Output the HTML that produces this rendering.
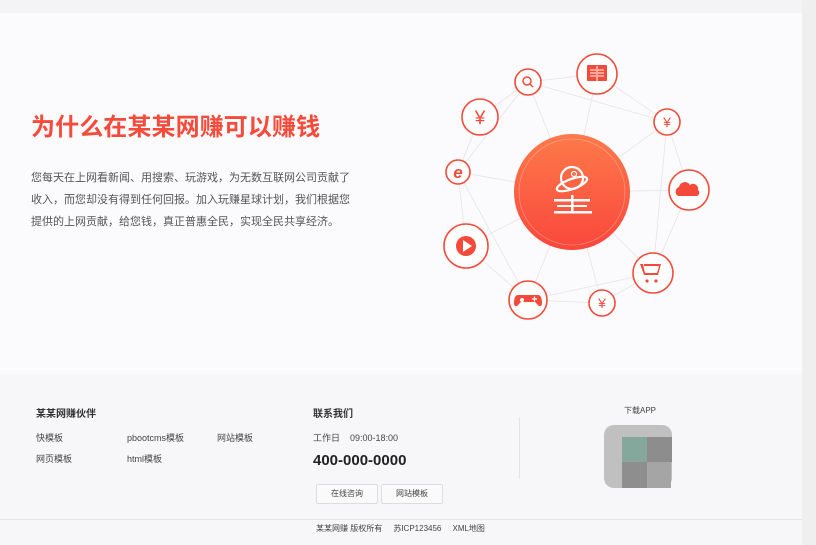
<!DOCTYPE html>
<html><head><meta charset="utf-8"><style>
*{margin:0;padding:0;box-sizing:border-box}
body{width:816px;height:545px;overflow:hidden;background:#fbfafc;font-family:"Liberation Sans","Noto Sans CJK SC",sans-serif;position:relative}
.a{position:absolute;white-space:nowrap}
.top{position:absolute;left:0;top:0;width:802px;height:13px;background:#f4f3f6}
.sb{position:absolute;right:0;top:0;width:14px;height:545px;background:#efefef}
h1{position:absolute;left:31px;top:107px;font-size:24px;font-weight:bold;color:#f54b3b;letter-spacing:0.1px;white-space:nowrap}
.p{position:absolute;left:31px;top:167px;font-size:11px;line-height:22px;color:#555;white-space:nowrap}
.foot{position:absolute;left:0;top:374px;width:802px;height:171px;background:#f7f6f9}
.f{font-size:9px;color:#444}
.btn{position:absolute;height:20px;border:1px solid #ddd;border-radius:2px;background:#fafafa;font-size:8px;color:#444;text-align:center;line-height:18px}
</style></head><body>
<div class="top"></div>
<h1>为什么在某某网赚可以赚钱</h1>
<div class="p">您每天在上网看新闻、用搜索、玩游戏，为无数互联网公司贡献了<br>收入，而您却没有得到任何回报。加入玩赚星球计划，我们根据您<br>提供的上网贡献，给您钱，真正普惠全民，实现全民共享经济。</div>
<svg class="a" style="left:0;top:0" width="802" height="374">
<defs><linearGradient id="g" x1="0" y1="0" x2="0" y2="1"><stop offset="0" stop-color="#fd7a4a"/><stop offset="1" stop-color="#f9473c"/></linearGradient></defs>
<g stroke="#e8e4e4" stroke-width="0.8" fill="none">
<path d="M528 82L597 74L667 122L689 190L653 273L602 303L528 300L466 246L458 172L480 117L528 82"/>
<path d="M528 82L667 122M528 82L572 192M597 74L572 192M667 122L572 192M689 190L572 192M653 273L572 192M602 303L572 192M528 300L572 192M466 246L572 192M458 172L572 192M528 82L458 172M458 172L528 300M667 122L653 273M528 300L653 273M480 117L458 172"/>
</g>
<circle cx="572" cy="192" r="58" fill="url(#g)"/>
<circle cx="572" cy="192" r="53" fill="none" stroke="#fff" stroke-opacity=".3" stroke-width=".8"/>
<g fill="#fff" stroke="none">
<rect x="554" y="199" width="36" height="2.5"/><rect x="557" y="205" width="30" height="2"/><rect x="554" y="211" width="38" height="2.5"/><rect x="571" y="195" width="2.5" height="18"/>
</g>
<g fill="none" stroke="#fff" stroke-width="2.2"><circle cx="572" cy="178" r="11"/><ellipse cx="572" cy="184" rx="16" ry="5" transform="rotate(-20 572 184)"/><circle cx="574" cy="174" r="2.5" stroke-width="1.2"/></g>
<g fill="#fff" stroke="#f44a3a" stroke-width="1.6">
<circle cx="528" cy="82" r="13"/><circle cx="597" cy="74" r="20"/><circle cx="667" cy="122" r="13"/><circle cx="480" cy="117" r="18"/><circle cx="458" cy="172" r="12"/><circle cx="689" cy="190" r="20"/><circle cx="466" cy="246" r="22"/><circle cx="653" cy="273" r="20"/><circle cx="528" cy="300" r="19"/><circle cx="602" cy="303" r="13"/>
</g>
<g fill="#f44a3a" stroke="none">
<rect x="587" y="65" width="20" height="16" rx="1"/>
<circle cx="466" cy="246" r="10"/>
<path d="M678 196a5 5 0 0 1 1-9a6 6 0 0 1 11-2a5 5 0 0 1 8 5a3.5 3.5 0 0 1 -1 6z"/>
<path d="M640 264h3l2 9h12l2-7h-15v-2h17l-3 11h-14z"/><circle cx="647" cy="281" r="1.6"/><circle cx="656" cy="281" r="1.6"/>
<path d="M518 295h20c3 0 4 4 4 8c0 4-3 4-5 1l-2-2h-14l-2 2c-2 3-5 3-5-1c0-4 1-8 4-8z"/>
</g>
<g stroke="#fff" stroke-width="1" fill="none"><path d="M590 70h6M590 73h6M590 76h6M598 70h6M598 73h6M598 76h6M597 66v15"/></g>
<path d="M463 240v12l9-6z" fill="#fff"/>
<g stroke="#f44a3a" stroke-width="1.5" fill="none"><circle cx="527" cy="81" r="4"/><path d="M530 84l3 3"/></g>
<g fill="#f44a3a" font-family="Liberation Sans,sans-serif" text-anchor="middle">
<text x="480" y="124" font-size="19">¥</text><text x="667" y="127" font-size="14">¥</text><text x="602" y="308" font-size="14">¥</text>
<text x="458" y="178" font-size="17" font-weight="bold" font-style="italic">e</text>
</g>
<g fill="#fff"><circle cx="522" cy="300" r="2"/><path d="M532 299h5M534.5 296.5v5" stroke="#fff" stroke-width="1.2"/></g>
</svg>
<div class="foot"></div>
<div class="a" style="left:36px;top:405px;font-size:10px;font-weight:bold;color:#333">某某网赚伙伴</div>
<div class="a f" style="left:36px;top:431px">快模板</div>
<div class="a f" style="left:127px;top:431px">pbootcms模板</div>
<div class="a f" style="left:217px;top:431px">网站模板</div>
<div class="a f" style="left:36px;top:452px">网页模板</div>
<div class="a f" style="left:127px;top:452px">html模板</div>
<div class="a" style="left:313px;top:405px;font-size:10px;font-weight:bold;color:#333">联系我们</div>
<div class="a f" style="left:313px;top:431px">工作日&nbsp;&nbsp;&nbsp;&nbsp;09:00-18:00</div>
<div class="a" style="left:313px;top:452px;font-size:15px;font-weight:bold;color:#222">400-000-0000</div>
<div class="btn" style="left:316px;top:484px;width:62px">在线咨询</div>
<div class="btn" style="left:381px;top:484px;width:62px">网站模板</div>
<div class="a" style="left:519px;top:417px;width:1px;height:62px;background:#e4e3e6"></div>
<div class="a f" style="left:624px;top:405px;font-size:8px">下载APP</div>
<div class="a" style="left:604px;top:425px;width:68px;height:63px;background:#c0c0c0;border-radius:10px"></div>
<div class="a" style="left:622px;top:437px;width:25px;height:25px;background:#86a89c"></div>
<div class="a" style="left:647px;top:437px;width:25px;height:25px;background:#8d8d8d"></div>
<div class="a" style="left:622px;top:462px;width:25px;height:26px;background:#8e8e8e"></div>
<div class="a" style="left:647px;top:462px;width:24px;height:26px;background:#a5a5a5"></div>
<div class="a" style="left:0;top:519px;width:802px;height:1px;background:#e6e5e8"></div>
<div class="a f" style="left:316px;top:523px;font-size:8px">某某网赚 版权所有&nbsp;&nbsp;&nbsp;&nbsp;&nbsp;苏ICP123456&nbsp;&nbsp;&nbsp;&nbsp;&nbsp;XML地图</div>
<div class="sb"></div>
</body></html>
